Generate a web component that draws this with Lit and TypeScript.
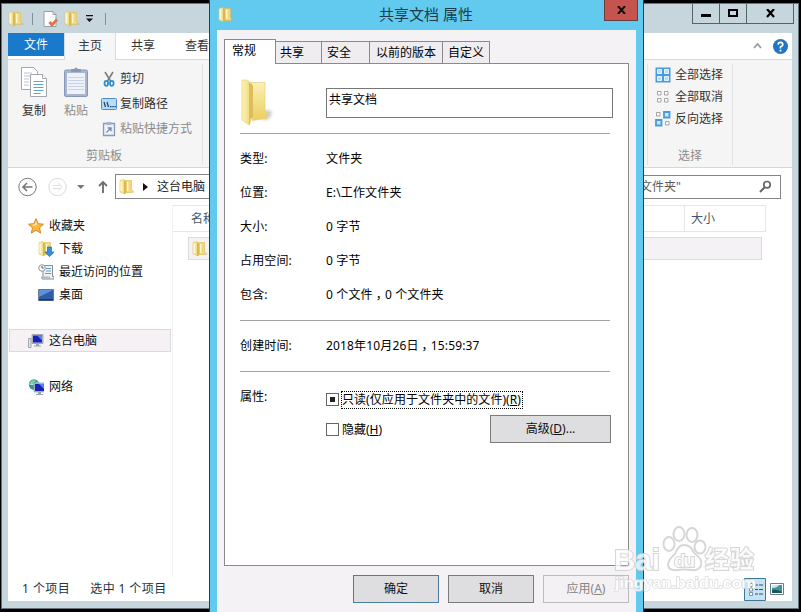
import { LitElement, html, svg, css } from "lit";
import { customElement, property } from "lit/decorators.js";

const base = css`
  *, :host { box-sizing: border-box; }
  :host { font: 12px/16px "Noto Sans", "Noto Sans CJK SC", sans-serif; color: #111; white-space: nowrap; }
  svg { display: block; flex: none; }
`;

const folder = () => svg`
  <path d="M1 1.500 5 .5v14L1 13z" fill="#f8e8a0" stroke="#e0c468" stroke-width=".6"/>
  <path d="M6 1.500h6.500V10l.7 1v2.500H7z" fill="#f2d878" stroke="#dcbb59" stroke-width=".6"/>
  <path d="M5 1 7.200 3v11L5 15.500z" fill="#dbb750"/>
  <path d="M2.200 2.500v9.500M8.700 3v9" stroke="#fff9d8" stroke-width="1.300"/>
  <path d="M14 11.500 16 13l-3 1.500z" fill="#aaa" opacity=".4"/>`;

const monitor = (x: number, y: number) => svg`<g transform="translate(${x} ${y})">
  <path d="M0 0h11v9H0z" fill="#b9c3cf" stroke="#7e8994" stroke-width=".6"/>
  <path d="M1 1h9v7H1z" fill="#1720b8"/><path d="M5 1h5v5z" fill="#5d80ee"/>
  <path d="M4 9h3v2h2v1H2v-1h2z" fill="#9aa5ae"/></g>`;

const icons: Record<string, () => unknown> = {
  folder,
  newdoc: () => svg`<path d="M2 .5h9l3 3v12H2z" fill="#fdfdfd" stroke="#9a9fa6"/><path d="M11 .5v3h3" fill="none" stroke="#9a9fa6"/>
    <path d="m7.500 11 2.500 3L15 8.500" fill="none" stroke="#e2704c" stroke-width="2.800"/>`,
  scissors: () => svg`<path d="M4 1 9.500 10M12 1 6.500 10" stroke="#7c8288" stroke-width="1.700" fill="none"/>
    <ellipse cx="5.300" cy="12.300" rx="1.800" ry="2.500" fill="none" stroke="#2b8fd0" stroke-width="1.800"/>
    <ellipse cx="10.800" cy="12.300" rx="1.800" ry="2.500" fill="none" stroke="#2b8fd0" stroke-width="1.800"/>`,
  path: () => svg`<rect x=".5" y="2.500" width="15" height="11" rx="1" fill="#b9dcf5" stroke="#4d8cc4"/>
    <path d="m3 6 1.500 5M6 6l1.500 5" stroke="#173f73" stroke-width="1.200"/><path d="M9 10h1.500v1.300H9zM11.300 10h1.400v1.300h-1.400zM13.500 10h1.300v1.300h-1.300z" fill="#173f73"/>`,
  shortcut: () => svg`<path d="M2.500 2.500h11v12h-11z" fill="#e9eef7" stroke="#8999bb" stroke-width="1.300"/><path d="M5.500 1h5v3h-5z" fill="#a8b4cc"/>
    <path d="M5 6h6v6H5z" fill="#fff"/><path d="M5.500 11.500 9.500 7.500M6.500 7H10v3.500" fill="none" stroke="#7488b5" stroke-width="1.400"/>`,
  star: () => svg`<path d="m8 .7 2.200 5 5.300.5-4 3.600 1.200 5.300L8 12.300l-4.700 2.800 1.200-5.300-4-3.600 5.300-.5z" fill="#f6b743" stroke="#db8426"/><path d="m8 3 1.300 3.700L6 8 3 7l3.500-.7z" fill="#ffe49a"/>`,
  download: () => svg`${folder()}<path d="M9.500 6h4v5H16l-4.500 4.700L7 11h2.500z" fill="#3590d8" stroke="#226eaf" stroke-width=".7"/>`,
  recent: () => svg`<path d="M5 1.500h9.500v11H16v2.500H4v-2h1z" fill="#eef2f5" stroke="#858f98"/>
    <path d="M8 4.500h5M8 7h5M7 9.500h6" stroke="#6a9ac6" stroke-width="1.200"/><circle cx="4" cy="4" r="3.300" fill="#f7f7f7" stroke="#9298a0"/><path d="M4 2v2h1.500" fill="none" stroke="#555"/>
    <path d="M3 12.500h9v2.500H4z" fill="#b4bcc4"/>`,
  desktop: () => svg`<path d="M.5 2.500h15v11H.5z" fill="#2e5ea8" stroke="#6c7885"/><path d="M1 3h14L1 10z" fill="#5a93dc"/><path d="M1 12h14v1.500H1z" fill="#1d3765"/>`,
  computer: () => svg`<path d="M.5 5.500h2.500v9H.5z" fill="#e3e6e8" stroke="#8d979f" stroke-width=".8"/>${monitor(4, 1.5)}`,
  network: () => svg`<circle cx="6" cy="5.500" r="5.200" fill="#2f93a4"/><path d="M2 3q3-3 6-1.500L6 5 3 6zM5 7l3 0-1 3z" fill="#7fd09b"/><path d="M1 5q4 2 9-2" stroke="#c3edf0" fill="none"/>${monitor(6, 4)}`,
  all: () => svg`<path d="M.5.500h15v15H.5z" fill="#4a9bdb"/><path d="M2.500 2.500h4v4h-4zM9.500 2.500h4v4h-4zM2.500 9.500h4v4h-4zM9.500 9.500h4v4h-4z" fill="#b8def7" stroke="#eaf6ff"/>`,
  none: () => svg`<path d="M2.500 2.500h3.500v3.500H2.500zM9.500 2.500H13v3.500H9.500zM2.500 9.500H6V13H2.500zM9.500 9.500H13V13H9.500z" fill="#fff" stroke="#a2a2a2"/>`,
  invert: () => svg`<path d="M1.500 1.500H5V5H1.500zM10.500 10.500H14V14h-3.500z" fill="#fff" stroke="#a2a2a2"/><path d="M9 1h5.500v5.500H9zM1 9h5.500v5.500H1z" fill="#c7e6fa" stroke="#4a9bdb" stroke-width="1.800"/>`,
};

const icon = (name: string, size = 16) => html`<svg width=${size} height=${size} viewBox="0 0 16 16">${icons[name]()}</svg>`;

@customElement("explorer-ribbon")
class ExplorerRibbon extends LitElement {
  static styles = [base, css`
    :host { display: block; color: #333; }
    .tabs { display: flex; height: 27px; background: #fff; border-bottom: 1px solid #dadbdc; }
    .tab { width: 54px; line-height: 26px; text-align: center; }
    .file { width: 56px; height: 23px; background: #1979ca; color: #fff; line-height: 23px; }
    .home { width: 52px; height: 27px; background: #f5f6f7; border: solid #dadbdc; border-width: 0 1px; }
    .help { display: flex; align-items: center; gap: 11px; margin-left: auto; padding-right: 4px; }
    .body { display: flex; height: 108px; background: #f5f5f6; border-bottom: 1px solid #d5d7d8; }
    .group { display: flex; flex-direction: column; height: 101px; margin-top: 4px; border-right: 1px solid #e2e3e4; }
    .clip { width: 195px; padding-left: 12px; }
    .select { width: 86px; margin-left: auto; margin-right: 59px; border-left: 1px solid #e2e3e4; }
    .row { display: flex; height: 84px; }
    .big { display: flex; flex-direction: column; align-items: center; width: 28px; padding-top: 3px; margin-right: 14px; gap: 5px; }
    .paste { margin-right: 11px; }
    .small { display: flex; flex-direction: column; padding-top: 2px; }
    .item { display: flex; align-items: center; gap: 3px; height: 25px; }
    .select .small { padding: 0 0 0 7px; height: 84px; }
    .select .item { height: 22px; gap: 4px; }
    .off, .label { color: #8b8b8b; }
    .label { text-align: center; }
    .clip .label { margin-left: -14px; }
  `];
  render() {
    return html`
      <div class="tabs">
        <div class="tab file">文件</div><div class="tab home">主页</div><div class="tab">共享</div><div class="tab">查看</div>
        <div class="help">
          <svg width="9" height="6" viewBox="0 0 9 6"><path d="m1 5 3.500-4L8 5" fill="none" stroke="#9b9b9b" stroke-width="1.800"/></svg>
          <svg width="15" height="15" viewBox="0 0 14 14"><circle cx="7" cy="7" r="7" fill="#2076c4"/><path d="M4.800 5.200Q5 3.200 7 3.200t2.200 2Q9.200 6.500 7 7.300V8.800M7 10v1.600" fill="none" stroke="#fff" stroke-width="1.600"/></svg>
        </div>
      </div>
      <div class="body">
        <div class="group clip">
          <div class="row">
            <div class="big">
              <svg width="28" height="31" viewBox="0 0 28 31"><g fill="#fff" stroke="#a3a6aa"><path d="M1.500.500h12l4 4v18h-16z"/><path d="M10.500 7.500h12l4 4v18h-16z"/><path d="M22.500 7.500v4h4" /></g>
                <path d="M4 6h8M4 9h6M4 12h5M4 15h5M4 18h5" stroke="#bdc6ce"/><path d="M13.500 14.500h10M13.500 17.500h10M13.500 20.500h10M13.500 23.500h10M13.500 26.500h7" stroke="#5da4dd"/></svg>
              复制
            </div>
            <div class="big paste">
              <svg width="26" height="31" viewBox="0 0 26 31"><rect x="1.500" y="3" width="23" height="26.500" rx="1.500" fill="#a9b6d0" stroke="#8697b9"/><path d="M4 6h18v21H4z" fill="#eef2f9"/>
                <path d="M8 5V2h3q2-3 4 0h3v3z" fill="#8797b4"/><path d="M5 10.500h16M5 13.500h16M5 16.500h16M5 19.500h16M5 22.500h16" stroke="#c8d2e5"/></svg>
              <span class="off">粘贴</span>
            </div>
            <div class="small">
              <div class="item">${icon("scissors")}剪切</div>
              <div class="item">${icon("path")}复制路径</div>
              <div class="item off">${icon("shortcut")}粘贴快捷方式</div>
            </div>
          </div>
          <div class="label">剪贴板</div>
        </div>
        <div class="group select">
          <div class="small">
            <div class="item">${icon("all")}全部选择</div>
            <div class="item">${icon("none")}全部取消</div>
            <div class="item">${icon("invert")}反向选择</div>
          </div>
          <div class="label">选择</div>
        </div>
      </div>`;
  }
}

@customElement("explorer-window")
class ExplorerWindow extends LitElement {
  static styles = [base, css`
    :host { display: flex; flex-direction: column; background: #c6d6dc; border: 1px solid #66747b; padding: 0 6px 7px 6px; }
    .title { display: flex; height: 29px; margin-right: -2px; }
    .quick { display: flex; align-items: center; height: 29px; }
    .sep { width: 1px; height: 12px; background: #7f9098; margin: 0 10px 0 6px; }
    .sep.first { margin: 0 9px 0 8px; }
    .sep.end { margin: 0 0 0 5px; }
    .more { margin-left: 0; }
    .doc { margin-right: 6px; }
    .controls { display: flex; height: 20px; margin-left: auto; border: 1px solid #52636c; border-top: 0; }
    .controls div { display: flex; align-items: center; justify-content: center; width: 27px; border-right: 1px solid #52636c; }
    .controls .x { width: 46px; border: 0; }
    .content { display: flex; flex-direction: column; flex: 1; background: #fff; }
    .address { display: flex; align-items: center; height: 37px; padding: 0 11px 0 10px; }
    .path { display: flex; align-items: center; width: 330px; height: 25px; border: 1px solid #858585; padding-left: 3px; color: #222; }
    .path .arrow { margin: 0 9px 0 8px; }
    .search { display: flex; align-items: center; justify-content: space-between; width: 200px; height: 24px; margin-left: auto; border: 1px solid #858585; padding: 0 8px 0 58px; color: #5c5c5c; }
    .main { display: flex; flex: 1; }
    .nav { width: 165px; padding: 9px 0 0 1px; border-right: 1px solid #f2f3f5; }
    .nav div { display: flex; align-items: center; gap: 5px; height: 23px; width: 162px; padding-left: 19px; }
    .nav .sub { padding-left: 29px; }
    .nav .current { padding-left: 18px; background: #f5f1f5; border: 1px solid #dcd9dc; }
    .nav .next { margin-top: 23px; }
    .list { flex: 1; padding-right: 26px; }
    .head { display: flex; height: 27px; align-items: center; border: 1px solid #e5e6e7; border-left: 0; color: #46556a; padding-left: 18px; }
    .head .size { width: 81px; height: 25px; line-height: 25px; margin-left: auto; padding-left: 6px; border-left: 1px solid #e5e6e7; }
    .file { display: flex; align-items: center; height: 23px; margin: 5px 4px 0 15px; padding-left: 3px; background: #f5f2f5; border: 1px solid #dcdcdc; }
    .status { display: flex; align-items: center; height: 24px; padding: 0 8px 0 14px; color: #223545; letter-spacing: .45px; }
    .status .sel { margin-left: 20px; letter-spacing: .4px; }
    .views { display: flex; align-items: center; margin-left: auto; gap: 4px; }
  `];
  render() {
    return html`
      <div class="title">
        <div class="quick">
          ${icon("folder")}<div class="sep first"></div>${icon("newdoc")}<div class="doc"></div>${icon("folder")}
          <svg class="more" width="20" height="8" viewBox="0 0 20 8"><path d="M6 0h7v1.300H6zM6 3.500h7L9.500 7z" fill="#111"/></svg>
          <div class="sep end"></div>
        </div>
        <div class="controls">
          <div><svg width="10" height="9"><path d="M0 5h10v3H0z"/></svg></div>
          <div><svg width="10" height="9" viewBox="0 0 10 9"><path d="M1 1h8v6H1z" fill="none" stroke="#000" stroke-width="2"/></svg></div>
          <div class="x"><svg width="9" height="9" viewBox="0 0 9 9"><path d="m1 0 7 8M8 0 1 8" stroke="#000" stroke-width="2.200"/></svg></div>
        </div>
      </div>
      <div class="content">
        <explorer-ribbon></explorer-ribbon>
        <div class="address">
          <svg width="97" height="20" viewBox="0 0 97 20"><g fill="none"><circle cx="9.500" cy="10" r="8.700" stroke="#777"/><path d="M5 10h9.500M9 6l-4 4 4 4" stroke="#777" stroke-width="1.600"/>
            <circle cx="39.500" cy="10" r="8.700" stroke="#dadada"/><path d="M35 8.500h8M35 11.500h8M40 5.500l4 4.500-4 4.500" stroke="#dedede"/></g>
            <path d="M59 8h7.500l-3.700 4z" fill="#777"/><path d="M85 16V5.500M81 9l4-4 4 4" fill="none" stroke="#707070" stroke-width="1.900"/></svg>
          <div class="path">${icon("folder")}<svg class="arrow" width="5" height="8"><path d="M0 0 5 4 0 8z" fill="#111"/></svg>这台电脑</div>
          <div class="search">文件夹"<svg width="13" height="13" viewBox="0 0 13 13"><circle cx="8" cy="4.700" r="3.200" fill="none" stroke="#666" stroke-width="1.700"/><path d="M5.500 7.500 1 12" stroke="#666" stroke-width="2"/></svg></div>
        </div>
        <div class="main">
          <div class="nav">
            <div>${icon("star")}收藏夹</div>
            <div class="sub">${icon("download")}下载</div>
            <div class="sub">${icon("recent")}最近访问的位置</div>
            <div class="sub">${icon("desktop")}桌面</div>
            <div class="current next">${icon("computer")}这台电脑</div>
            <div class="next">${icon("network")}网络</div>
          </div>
          <div class="list">
            <div class="head">名称<div class="size">大小</div></div>
            <div class="file">${icon("folder")}</div>
          </div>
        </div>
        <div class="status">
          <span>1 个项目</span><span class="sel">选中 1 个项目</span>
          <div class="views">
            <svg width="22" height="23" viewBox="0 0 22 23"><path d="M.5.500h21v22H.5z" fill="#c4e4f5" stroke="#3f7897"/><path d="M5.500 5.500h3v3h-3zM5.500 10h3v3h-3zM5.500 14.500h3v3h-3z" fill="#fff" stroke="#5e7f94" stroke-width=".8"/><path d="M11 7h3M15 7h4M11 11.500h3M15 11.500h4M11 16h3M15 16h4" stroke="#43494d"/></svg>
            <svg width="14" height="12" viewBox="0 0 14 12"><path d="M.5.500h13v11H.5z" fill="#fff" stroke="#6a8088"/><path d="M2 2h10v8H2z" fill="#3f93a8"/><path d="M2 2h7q-2 3-7 3z" fill="#c9ecf4"/><path d="M2 7q5-1 10 2v1H2z" fill="#1d5454"/></svg>
          </div>
        </div>
      </div>`;
  }
}

@customElement("dialog-button")
class DialogButton extends LitElement {
  @property() kind = "";
  static styles = [base, css`
    :host { display: block; }
    .b { height: 28px; line-height: 26px; text-align: center; background: #dedddf; border: 1px solid #7b7b7b; }
    .primary { border-color: #4a7ea0; }
    .disabled { background: #f3f1f4; border-color: #bdbbbe; color: #858585; }
  `];
  render() { return html`<div class="b ${this.kind}"><slot></slot></div>`; }
}

@customElement("property-dialog")
class PropertyDialog extends LitElement {
  static styles = [base, css`
    :host { display: flex; flex-direction: column; background: #62caef; border: solid #17445a; border-width: 0 1px; padding: 0 7px; color: #000; }
    .title { display: flex; height: 30px; color: #1d3b4b; }
    .title svg { margin: 7px 0 0 1px; }
    .name { font-size: 15px; line-height: 29px; flex: 1; text-align: center; padding-left: 14px; }
    .close { display: flex; align-items: center; justify-content: center; width: 34px; height: 21px; margin-right: -2px; background: #c5544f; border: 1px solid #693c3e; border-top: 0; }
    .close svg { margin: 0; }
    .body { flex: 1; background: #f5f2f6; padding: 9px 7px 0; }
    .tabs { display: flex; height: 24px; align-items: flex-end; }
    .tab { height: 22px; line-height: 21px; border: solid #8c898d; border-width: 1px 1px 0 0; background: #f0edf1; }
    .active { position: relative; width: 52px; height: 25px; background: #fff; border-left-width: 1px; padding-left: 7px; margin-bottom: -1px; }
    .w46 { width: 46px; padding-left: 4px; } .w48 { width: 48px; padding-left: 5px; } .w72 { width: 73px; padding-left: 6px; } .w47 { width: 47px; padding-left: 5px; }
    .panel { height: 503px; background: #fff; border: 1px solid #8c898d; padding: 14px 15px 0 15px; }
    .identity { display: flex; height: 56px; border-bottom: 1px solid #a2a2a2; margin-right: 3px; padding-bottom: 1px; }
    .input { width: 287px; height: 30px; margin: 10px -3px 0 auto; border: 1px solid #777; padding: 3px 2px; }
    .facts { display: grid; grid-template-columns: 86px 1fr; grid-auto-rows: 34px; align-items: center; height: 187px; padding-top: 8px; margin-right: 3px; border-bottom: 1px solid #a2a2a2; }
    .facts.created { height: 51px; padding-top: 8px; }
    .facts span { letter-spacing: .15px; }
    .facts .comma { margin: 0 -3px 0 3px; }
    .attrs { display: grid; grid-template-columns: 86px 1fr; padding-top: 17px; }
    .checks { display: flex; flex-direction: column; gap: 11px; padding-top: 1px; }
    .check { display: flex; align-items: center; height: 19px; gap: 2px; }
    .box { width: 13px; height: 13px; border: 1px solid #666; display: flex; align-items: center; justify-content: center; }
    .dot { width: 5px; height: 5px; background: #222; }
    .focus { border: 1px dotted #000; height: 18px; line-height: 16px; padding: 0 1px 0 0; letter-spacing: .06px; }
    .plain { padding-left: 1px; }
    .advanced { width: 121px; margin: -1px 2px 0 auto; }
    .buttons { display: flex; gap: 9px; justify-content: flex-end; padding-top: 9px; }
    .buttons dialog-button { width: 86px; }
  `];
  render() {
    const comma = html`<span class="comma">，</span>`;
    const facts = [["类型:", "文件夹"], ["位置:", "E:\\工作文件夹"], ["大小:", "0 字节"], ["占用空间:", "0 字节"], ["包含:", html`0 个文件${comma}0 个文件夹`]];
    return html`
      <div class="title">${icon("folder")}<div class="name">共享文档 属性</div>
        <div class="close"><svg width="9" height="8" viewBox="0 0 9 8"><path d="m1 0 7 8M8 0 1 8" stroke="#111" stroke-width="2"/></svg></div>
      </div>
      <div class="body">
        <div class="tabs"><div class="tab active">常规</div><div class="tab w46">共享</div><div class="tab w48">安全</div><div class="tab w72">以前的版本</div><div class="tab w47">自定义</div></div>
        <div class="panel">
          <div class="identity">
            <svg width="36" height="50" viewBox="0 0 36 50">
              <defs><linearGradient id="a" x2="1"><stop stop-color="#fdf2b2"/><stop offset="1" stop-color="#ecd676"/></linearGradient>
              <linearGradient id="b" x2="0" y2="1"><stop stop-color="#fcefb5"/><stop offset="1" stop-color="#ebcf60"/></linearGradient>
              <filter id="s" x="-50%" y="-50%" width="200%" height="200%"><feGaussianBlur stdDeviation="1.500"/></filter></defs>
              <path d="M24 33q7-3 8 2-1 6-8 8z" fill="#888" opacity=".4" filter="url(#s)"/>
              <path d="M11 4.500h14v27l1.500 3v6l-14 2z" fill="url(#b)" stroke="#e6ca70" stroke-width=".6"/>
              <path d="M2 2 7 2l5 4v34l-3 7-7-5z" fill="url(#a)" stroke="#e5cb74" stroke-width=".6"/><path d="m9 4 4 4v31l-3 2v5l-1 1z" fill="#dcbd5a"/>
            </svg>
            <div class="input">共享文档</div>
          </div>
          <div class="facts">${facts.map(([k, v]) => html`<span>${k}</span><span>${v}</span>`)}</div>
          <div class="facts created"><span>创建时间:</span><span>2018年10月26日${comma}15:59:37</span></div>
          <div class="attrs"><span>属性:</span>
            <div class="checks">
              <div class="check"><div class="box"><div class="dot"></div></div><span class="focus">只读(仅应用于文件夹中的文件)(<u>R</u>)</span></div>
              <div class="check"><div class="box"></div><span class="plain">隐藏(<u>H</u>)</span>
                <dialog-button class="advanced">高级(<u>D</u>)...</dialog-button></div>
            </div>
          </div>
        </div>
        <div class="buttons"><dialog-button kind="primary">确定</dialog-button><dialog-button>取消</dialog-button><dialog-button kind="disabled">应用(<u>A</u>)</dialog-button></div>
      </div>`;
  }
}

@customElement("site-watermark")
class SiteWatermark extends LitElement {
  static styles = css`
    :host { display: block; }
    text { font-family: "Liberation Sans", "Noto Sans CJK SC", sans-serif; font-weight: 700; paint-order: stroke; }
    .mark { fill: #fff; fill-opacity: .85; stroke: #d0d0d3; stroke-width: 2px; }
    .url { font-size: 15px; fill: #fff; stroke: #d8d8dc; stroke-width: 1.5px; }
  `;
  render() {
    return html`<svg width="150" height="76" viewBox="0 0 150 76" opacity=".85">
      <g class="mark"><text x="1" y="45" font-size="30" textLength="46" lengthAdjust="spacingAndGlyphs">Bai</text>
        <ellipse cx="56" cy="19" rx="5.500" ry="7"/><ellipse cx="66" cy="9" rx="5.500" ry="7"/><ellipse cx="79" cy="10" rx="5.500" ry="7"/><ellipse cx="87" cy="22" rx="5.500" ry="6.500"/>
        <path d="M71 20q7 0 10 8 9 6 7 12-2 6-9 5-8-1-15 0-8 1-9-5 0-5 7-11 3-9 9-9z"/>
        <text x="61" y="42" font-size="19" textLength="21">du</text>
        <text x="92" y="43" font-size="24" textLength="49">经验</text></g>
      <text class="url" x="2" y="63" textLength="141" lengthAdjust="spacingAndGlyphs">jingyan.baidu.com</text>
    </svg>`;
  }
}

@customElement("app-root")
class AppRoot extends LitElement {
  static styles = css`
    :host { display: block; position: relative; width: 801px; height: 612px; background: #000; overflow: hidden; }
    .explorer { position: absolute; left: 1px; top: 3px; width: 798px; height: 606px; }
    .dialog { position: absolute; left: 209px; top: 0; width: 435px; height: 612px; }
    .watermark { position: absolute; left: 613px; top: 525px; }
  `;
  render() {
    return html`<explorer-window class="explorer"></explorer-window>
      <property-dialog class="dialog"></property-dialog>
      <site-watermark class="watermark"></site-watermark>`;
  }
}
